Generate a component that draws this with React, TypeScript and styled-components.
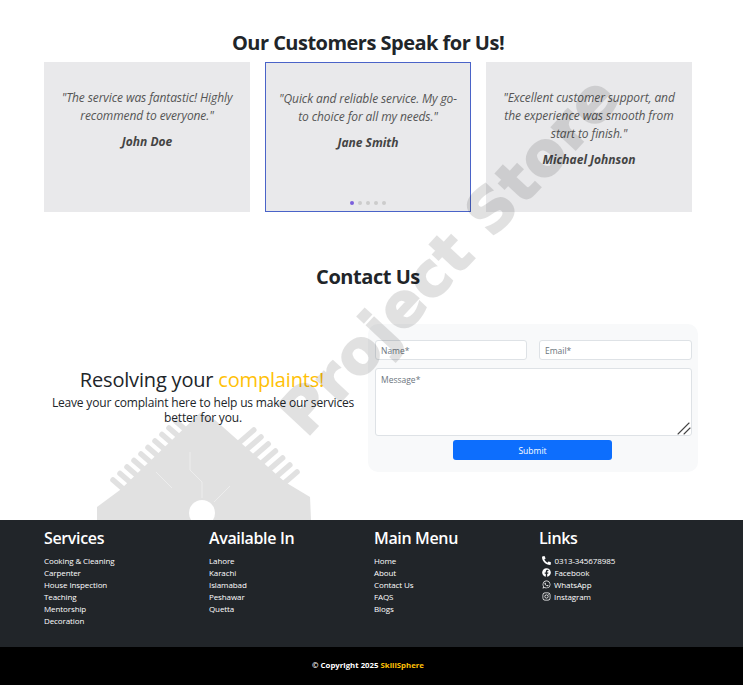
import styled, { createGlobalStyle } from 'styled-components';
import { FaFacebook, FaInstagram, FaPhoneAlt, FaWhatsapp } from 'react-icons/fa';

const GlobalStyle = createGlobalStyle`
  html, body {
    margin: 0;
    padding: 0;
    background: #ffffff;
  }
  body {
    font-family: "Open Sans", "Noto Sans", sans-serif;
    color: #212529;
  }
  * {
    box-sizing: border-box;
  }
`;

const S = {
  Page: styled.div`
    position: relative;
    width: 743px;
    height: 685px;
    overflow: hidden;
  `,
  Main: styled.main`
    width: 736px;
    height: 520px;
    padding: 30px 44px 0;
  `,
  Heading: styled.h2`
    margin: 0;
    font-size: 20px;
    line-height: 26px;
    font-weight: 700;
    letter-spacing: -0.52px;
    text-align: center;
    color: #212529;
  `,
  Cards: styled.div`
    display: grid;
    grid-template-columns: repeat(3, 206px);
    gap: 15px;
    margin-top: 6px;
  `,
  Card: styled.article<{ $active?: boolean }>`
    position: relative;
    height: 150px;
    padding: ${(p) => (p.$active ? '27px 12px 0' : '27px 13px 0')};
    background: #e9e9eb;
    border: ${(p) => (p.$active ? '1px solid #4a63c8' : 'none')};
    text-align: center;
  `,
  Quote: styled.p`
    margin: 0;
    font-size: 12px;
    line-height: 18px;
    font-style: italic;
    letter-spacing: -0.1px;
    color: #555555;
  `,
  Author: styled.p`
    margin: 8px 0 0;
    font-size: 12px;
    line-height: 18px;
    font-style: italic;
    font-weight: 700;
    color: #444444;
  `,
  Dots: styled.div`
    position: absolute;
    left: 0;
    right: 0;
    bottom: 6px;
    display: flex;
    justify-content: center;
    gap: 4px;
  `,
  Dot: styled.span<{ $active?: boolean }>`
    width: 4px;
    height: 4px;
    border-radius: 50%;
    background: ${(p) => (p.$active ? '#7b5fdc' : '#cccccc')};
  `,
  ContactTitle: styled.h2`
    margin: 52px 0 0;
    font-size: 20px;
    line-height: 26px;
    font-weight: 700;
    letter-spacing: -0.45px;
    text-align: center;
    color: #212529;
  `,
  Contact: styled.div`
    display: grid;
    grid-template-columns: 324px 330px;
    margin-top: 34px;
  `,
  Intro: styled.div`
    display: flex;
    flex-direction: column;
    justify-content: center;
    text-align: center;
    padding: 0 6px 3px 0;
  `,
  IntroTitle: styled.h3`
    margin: 0 0 0 -2px;
    font-size: 20px;
    line-height: 24px;
    font-weight: 400;
    letter-spacing: -0.18px;
  `,
  Accent: styled.span`
    color: #ffc107;
  `,
  IntroText: styled.p`
    margin: 3px 0 0;
    font-size: 12px;
    line-height: 15px;
    letter-spacing: -0.17px;
  `,
  Form: styled.form`
    height: 148px;
    padding: 16px 6px 0 7px;
    background: #f8f9fa;
    border-radius: 10px;
  `,
  Row: styled.div`
    display: grid;
    grid-template-columns: 152px 153px;
    gap: 12px;
  `,
  Input: styled.input`
    display: block;
    width: 100%;
    height: 20px;
    padding: 0 5px;
    background: #ffffff;
    border: 1px solid #dee2e6;
    border-radius: 3px;
    font: 400 8.5px "Open Sans", sans-serif;
    outline: none;
    &::placeholder {
      color: #6c757d;
      opacity: 1;
    }
  `,
  MessageBox: styled.div`
    position: relative;
    margin-top: 8px;
  `,
  TextArea: styled.textarea`
    display: block;
    width: 100%;
    height: 68px;
    padding: 5px;
    background: #ffffff;
    border: 1px solid #dee2e6;
    border-radius: 3px;
    font: 400 8.5px "Open Sans", sans-serif;
    outline: none;
    resize: none;
    &::placeholder {
      color: #6c757d;
      opacity: 1;
    }
  `,
  Grip: styled.svg`
    position: absolute;
    right: 1px;
    bottom: 1px;
    width: 14px;
    height: 14px;
  `,
  Submit: styled.button`
    display: block;
    width: 159px;
    height: 20px;
    margin: 4px 0 0 78px;
    padding: 0;
    background: #0d6efd;
    border: none;
    border-radius: 3px;
    color: #ffffff;
    font: 400 8.5px "Open Sans", sans-serif;
  `,
  Footer: styled.footer`
    position: relative;
    z-index: 6;
    display: grid;
    grid-template-columns: repeat(4, 165px);
    height: 127px;
    padding: 9px 0 0 44px;
    background: #212529;
    color: #ffffff;
  `,
  Column: styled.div`
    display: flex;
    flex-direction: column;
  `,
  ColumnTitle: styled.h4`
    margin: 0 0 6px;
    font-size: 16px;
    line-height: 19px;
    font-weight: 600;
    letter-spacing: -0.35px;
  `,
  FooterLink: styled.a`
    display: flex;
    align-items: center;
    height: 12px;
    font-size: 8px;
    letter-spacing: -0.1px;
    color: #ffffff;
  `,
  IconSlot: styled.span<{ $wide?: boolean }>`
    display: inline-flex;
    align-items: center;
    margin: 0 ${(p) => (p.$wide ? '3.5px' : '3px')} 0 3px;
    font-size: 9px;
  `,
  Copyright: styled.div`
    position: relative;
    z-index: 6;
    height: 38px;
    display: flex;
    align-items: center;
    justify-content: center;
    padding: 0 7px 2px 0;
    background: #000000;
    color: #ffffff;
    font-size: 7.8px;
    font-weight: 700;
    white-space: pre;
  `,
  Brand: styled.span`
    color: #ffc107;
  `,
  Watermark: styled.div`
    position: absolute;
    inset: 0;
    pointer-events: none;
    z-index: 5;
  `,
  WatermarkText: styled.span`
    position: absolute;
    left: 291px;
    top: 390px;
    transform: rotate(-47deg);
    transform-origin: 0 50%;
    font: 700 60px/68px "DejaVu Sans", sans-serif;
    letter-spacing: 1.4px;
    color: #000000;
    -webkit-text-stroke: 2px #000000;
    opacity: 0.115;
    white-space: nowrap;
  `,
  WatermarkLogo: styled.svg`
    position: absolute;
    left: 90px;
    top: 400px;
    width: 230px;
    height: 120px;
    opacity: 0.115;
  `,
};

const testimonials = [
  { quote: '"The service was fantastic! Highly recommend to everyone."', author: 'John Doe' },
  { quote: '"Quick and reliable service. My go-to choice for all my needs."', author: 'Jane Smith', active: true },
  { quote: '"Excellent customer support, and the experience was smooth from start to finish."', author: 'Michael Johnson' },
];

const columns = [
  { title: 'Services', links: ['Cooking & Cleaning', 'Carpenter', 'House Inspection', 'Teaching', 'Mentorship', 'Decoration'] },
  { title: 'Available In', links: ['Lahore', 'Karachi', 'Islamabad', 'Peshawar', 'Quetta'] },
  { title: 'Main Menu', links: ['Home', 'About', 'Contact Us', 'FAQS', 'Blogs'] },
];

const socials = [
  { icon: <FaPhoneAlt />, label: '0313-345678985', wide: true },
  { icon: <FaFacebook />, label: 'Facebook', wide: true },
  { icon: <FaWhatsapp />, label: 'WhatsApp' },
  { icon: <FaInstagram />, label: 'Instagram' },
];

// grey chip of the watermark: coordinates are page pixels minus (90, 400)
function ChipLogo() {
  const leftFins = Array.from({ length: 10 }, (_, i) => {
    const x = 23 + i * 7;
    const y = 80 - i * 6.5;
    return <line key={`l${i}`} x1={x} y1={y} x2={x + 15} y2={y + 13} />;
  });
  const rightFins = Array.from({ length: 7 }, (_, i) => {
    const x = 207 - i * 7.2;
    const y = 72 - i * 7;
    return <line key={`r${i}`} x1={x} y1={y} x2={x - 15} y2={y + 13} />;
  });
  return (
    <S.WatermarkLogo viewBox="0 0 230 120">
      <g stroke="#000" strokeWidth={5.5} strokeLinecap="round">
        {leftFins}
        {rightFins}
      </g>
      <path d="M7 120V107L30 90L110 13L125 20L195 82L220 97L221 120Z" fill="#000" />
      <circle cx={112} cy={113} r={13} fill="#fff" />
      <path d="M112 98V82L100 70V52M124 102L140 86M82 88L66 72" fill="none" stroke="#fff" strokeWidth={1} opacity={0.4} />
    </S.WatermarkLogo>
  );
}

export default function App() {
  return (
    <S.Page>
      <GlobalStyle />
      <S.Main>
        <S.Heading>Our Customers Speak for Us!</S.Heading>
        <S.Cards>
          {testimonials.map((t) => (
            <S.Card key={t.author} $active={t.active}>
              <S.Quote>{t.quote}</S.Quote>
              <S.Author>{t.author}</S.Author>
              {t.active && (
                <S.Dots>
                  <S.Dot $active />
                  <S.Dot />
                  <S.Dot />
                  <S.Dot />
                  <S.Dot />
                </S.Dots>
              )}
            </S.Card>
          ))}
        </S.Cards>
        <S.ContactTitle>Contact Us</S.ContactTitle>
        <S.Contact>
          <S.Intro>
            <S.IntroTitle>
              Resolving your <S.Accent>complaints!</S.Accent>
            </S.IntroTitle>
            <S.IntroText>Leave your complaint here to help us make our services better for you.</S.IntroText>
          </S.Intro>
          <S.Form>
            <S.Row>
              <S.Input placeholder="Name*" />
              <S.Input placeholder="Email*" />
            </S.Row>
            <S.MessageBox>
              <S.TextArea placeholder="Message*" />
              <S.Grip viewBox="0 0 14 14" stroke="#444" strokeWidth={1.1} strokeLinecap="round">
                <line x1="1" y1="13" x2="12" y2="2" />
                <line x1="7" y1="13" x2="13" y2="7" />
              </S.Grip>
            </S.MessageBox>
            <S.Submit type="button">Submit</S.Submit>
          </S.Form>
        </S.Contact>
      </S.Main>
      <S.Footer>
        {columns.map((c) => (
          <S.Column key={c.title}>
            <S.ColumnTitle>{c.title}</S.ColumnTitle>
            {c.links.map((l) => (
              <S.FooterLink key={l}>{l}</S.FooterLink>
            ))}
          </S.Column>
        ))}
        <S.Column>
          <S.ColumnTitle>Links</S.ColumnTitle>
          {socials.map((s) => (
            <S.FooterLink key={s.label}>
              <S.IconSlot $wide={s.wide}>{s.icon}</S.IconSlot>
              {s.label}
            </S.FooterLink>
          ))}
        </S.Column>
      </S.Footer>
      <S.Copyright>
        © Copyright 2025 <S.Brand>SkillSphere</S.Brand>
      </S.Copyright>
      <S.Watermark>
        <ChipLogo />
        <S.WatermarkText>Project Store</S.WatermarkText>
      </S.Watermark>
    </S.Page>
  );
}
